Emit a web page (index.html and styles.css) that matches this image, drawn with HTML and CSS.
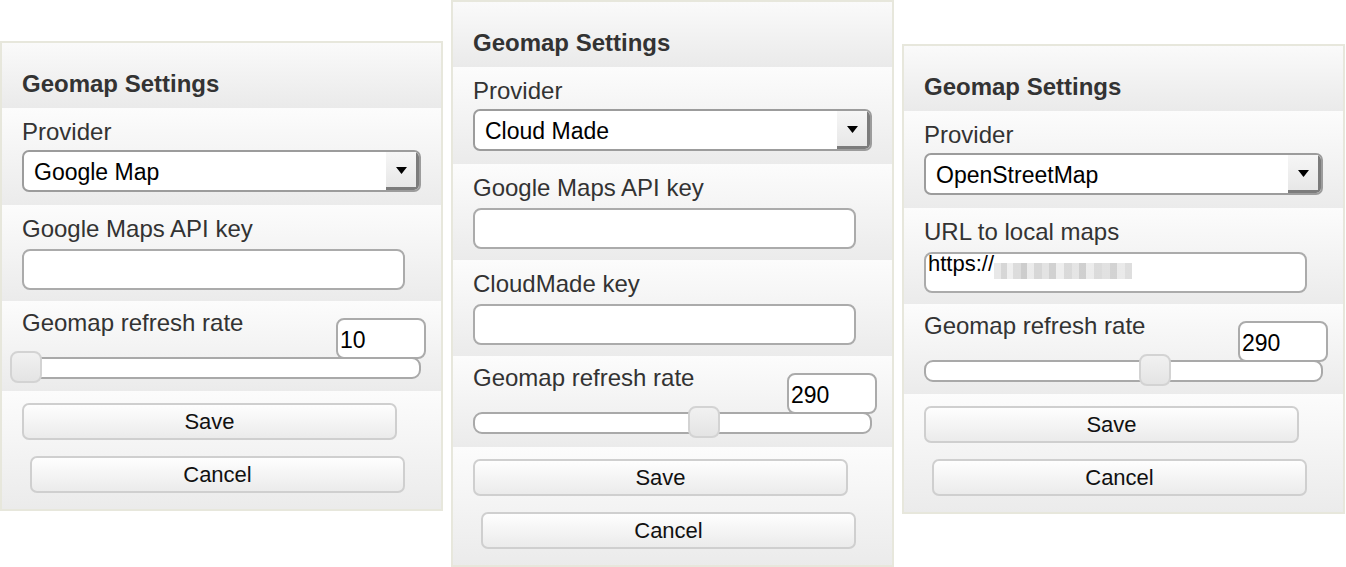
FILE: index.html
```html
<!DOCTYPE html>
<html>
<head>
<meta charset="utf-8">
<link rel="stylesheet" href="styles.css">
</head>
<body>
<div class="stage">

  <div class="panel panel--a">
    <div class="panel-head"><h2 class="title">Geomap Settings</h2></div>
    <div class="field field--provider">
      <div class="label">Provider</div>
      <div class="select">
        <span class="select-text">Google Map</span>
        <span class="select-arrow"><svg width="11" height="7" viewBox="0 0 11 7"><path d="M0 0H11L5.5 7Z" fill="#000"/></svg></span>
      </div>
    </div>
    <div class="field field--key">
      <div class="label">Google Maps API key</div>
      <div class="textbox"></div>
    </div>
    <div class="field field--rate">
      <div class="rate-row">
        <div class="label">Geomap refresh rate</div>
        <div class="numbox">10</div>
      </div>
      <div class="track track--wide"><span class="thumb" style="left:-2px"></span></div>
    </div>
    <div class="field field--buttons">
      <div class="btn btn--save">Save</div>
      <div class="btn btn--cancel">Cancel</div>
    </div>
  </div>

  <div class="panel panel--b">
    <div class="panel-head"><h2 class="title">Geomap Settings</h2></div>
    <div class="field field--provider">
      <div class="label">Provider</div>
      <div class="select">
        <span class="select-text">Cloud Made</span>
        <span class="select-arrow"><svg width="11" height="7" viewBox="0 0 11 7"><path d="M0 0H11L5.5 7Z" fill="#000"/></svg></span>
      </div>
    </div>
    <div class="field field--key">
      <div class="label">Google Maps API key</div>
      <div class="textbox"></div>
    </div>
    <div class="field field--key">
      <div class="label">CloudMade key</div>
      <div class="textbox"></div>
    </div>
    <div class="field field--rate">
      <div class="rate-row">
        <div class="label">Geomap refresh rate</div>
        <div class="numbox">290</div>
      </div>
      <div class="track"><span class="thumb" style="left:213px"></span></div>
    </div>
    <div class="field field--buttons">
      <div class="btn btn--save">Save</div>
      <div class="btn btn--cancel">Cancel</div>
    </div>
  </div>

  <div class="panel panel--c">
    <div class="panel-head"><h2 class="title">Geomap Settings</h2></div>
    <div class="field field--provider">
      <div class="label">Provider</div>
      <div class="select">
        <span class="select-text">OpenStreetMap</span>
        <span class="select-arrow"><svg width="11" height="7" viewBox="0 0 11 7"><path d="M0 0H11L5.5 7Z" fill="#000"/></svg></span>
      </div>
    </div>
    <div class="field field--key">
      <div class="label">URL to local maps</div>
      <div class="textbox textbox--filled">https://<span class="blurred"></span></div>
    </div>
    <div class="field field--rate">
      <div class="rate-row">
        <div class="label">Geomap refresh rate</div>
        <div class="numbox">290</div>
      </div>
      <div class="track"><span class="thumb" style="left:213px"></span></div>
    </div>
    <div class="field field--buttons">
      <div class="btn btn--save">Save</div>
      <div class="btn btn--cancel">Cancel</div>
    </div>
  </div>

</div>
</body>
</html>
```

FILE: styles.css
```css
html, body {
  margin: 0;
  padding: 0;
  height: 100%;
  overflow: hidden;
  background: #ffffff;
}

body {
  font-family: "Liberation Sans", Arial, Helvetica, sans-serif;
  color: #333333;
}

.stage {
  display: flex;
  align-items: flex-start;
  gap: 8px;
}

.panel {
  width: 443px;
  flex: 0 0 443px;
  box-sizing: border-box;
  border: 2px solid #e7e7dc;
  display: flex;
  flex-direction: column;
  background: #f2f2f2;
}

.panel--a { margin-top: 41px; }
.panel--b { margin-top: 0; }
.panel--c { margin-top: 44px; }

.panel-head {
  height: 65px;
  box-sizing: border-box;
  padding: 27px 20px 0 20px;
  background: linear-gradient(#fafafa, #eaeaea);
}

.title {
  margin: 0;
  font-size: 24px;
  line-height: 28px;
  font-weight: bold;
  color: #333333;
}

.field {
  box-sizing: border-box;
  padding: 10px 15px 0 20px;
  background: linear-gradient(#fcfcfc, #ebebeb);
}

.label {
  font-size: 24px;
  line-height: 28px;
  color: #333333;
}

.field--provider { height: 97px; }

.select {
  margin-top: 4px;
  width: 399px;
  height: 42px;
  box-sizing: border-box;
  border: 2px solid #9c9c9c;
  border-radius: 7px;
  background: #ffffff;
  display: flex;
  overflow: hidden;
}

.select-text {
  flex: 1;
  padding-left: 10px;
  font-size: 23px;
  line-height: 40px;
  color: #000000;
}

.select-arrow {
  width: 30px;
  display: flex;
  align-items: center;
  justify-content: center;
  padding-right: 3px;
  padding-bottom: 2px;
  background: linear-gradient(#f6f6f6, #e6e6e6);
  box-shadow: inset -3px -3px 0 #7c7c7c;
}

.field--key { height: 96px; }

.textbox {
  margin-top: 6px;
  width: 383px;
  height: 41px;
  box-sizing: border-box;
  border: 2px solid #ababab;
  border-radius: 8px;
  background: #ffffff;
}

.textbox--filled {
  padding: 0 2px;
  font-size: 22px;
  line-height: 20px;
  color: #000000;
  display: flex;
  align-items: flex-start;
}

.blurred {
  display: inline-block;
  width: 138px;
  height: 16px;
  margin-top: 9px;
  background: linear-gradient(90deg,
    #e4e4e4 0 7px, #cfcfcf 7px 13px, #ececec 13px 19px, #d6d6d6 19px 27px,
    #c4c4c4 27px 33px, #e8e8e8 33px 40px, #d0d0d0 40px 48px, #dedede 48px 55px,
    #c9c9c9 55px 62px, #ebebeb 62px 70px, #d3d3d3 70px 78px, #e0e0e0 78px 85px,
    #c7c7c7 85px 92px, #e9e9e9 92px 100px, #d5d5d5 100px 108px, #dcdcdc 108px 116px,
    #cbcbcb 116px 123px, #e6e6e6 123px 131px, #d8d8d8 131px 138px);
  opacity: 0.85;
}

.field--rate {
  height: 90px;
  padding-top: 8px;
}

.panel--b .field--rate { height: 91px; }

.rate-row {
  width: 404px;
  display: flex;
  justify-content: space-between;
  align-items: flex-start;
}

.numbox {
  margin-top: 9px;
  width: 90px;
  height: 41px;
  box-sizing: border-box;
  border: 2px solid #ababab;
  border-radius: 8px;
  background: #ffffff;
  padding: 4px 0 0 2px;
  font-size: 23px;
  line-height: 33px;
  color: #000000;
}

.track {
  position: relative;
  margin-top: -2px;
  width: 399px;
  height: 22px;
  box-sizing: border-box;
  border: 2px solid #a9a9a9;
  border-radius: 9px;
  background: #ffffff;
}

.track--wide {
  width: 411px;
  margin-left: -12px;
}

.thumb {
  position: absolute;
  top: -8px;
  width: 32px;
  height: 32px;
  box-sizing: border-box;
  border: 2px solid #d3d3d3;
  border-radius: 8px;
  background: linear-gradient(#f1f1f1, #e4e4e4);
}

.field--buttons {
  height: 118px;
  padding-top: 12px;
}

.btn {
  width: 375px;
  height: 37px;
  box-sizing: border-box;
  border: 2px solid #cfcfcf;
  border-radius: 7px;
  background: linear-gradient(#fefefe, #ebebeb);
  font-size: 22px;
  line-height: 33px;
  text-align: center;
  color: #111111;
}

.btn--cancel {
  margin-top: 16px;
  margin-left: 8px;
}
```
